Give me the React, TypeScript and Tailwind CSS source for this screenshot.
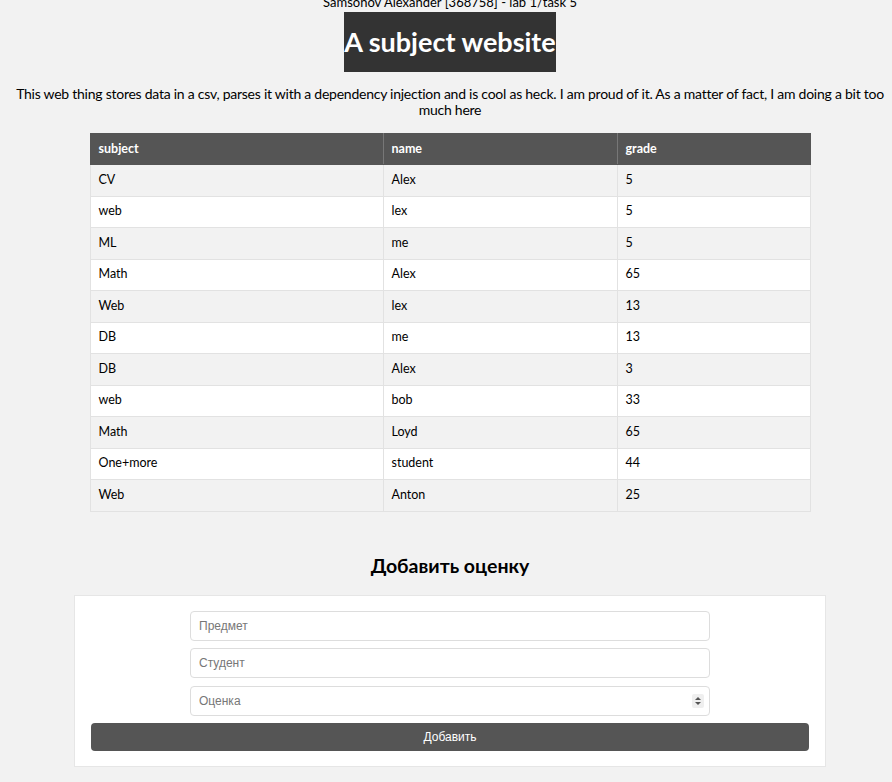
import React from "react";

const rows: [string, string, string][] = [
	["CV", "Alex", "5"],
	["web", "lex", "5"],
	["ML", "me", "5"],
	["Math", "Alex", "65"],
	["Web", "lex", "13"],
	["DB", "me", "13"],
	["DB", "Alex", "3"],
	["web", "bob", "33"],
	["Math", "Loyd", "65"],
	["One+more", "student", "44"],
	["Web", "Anton", "25"],
];

function Spinner() {
	return (
		<svg width="12" height="14" viewBox="0 0 12 14" className="absolute right-[6px] top-[8px]">
			<rect x="0" y="0" width="12" height="14" rx="2" fill="#efefef" />
			<path d="M3 6 L6 3 L9 6 Z" fill="#555" />
			<path d="M3 8 L6 11 L9 8 Z" fill="#555" />
		</svg>
	);
}

export default function App() {
	return (
		<div
			className="min-h-screen w-full bg-[#f2f2f2] pl-2 text-black"
			style={{ fontFamily: "Lato, 'Noto Sans', sans-serif" }}
		>
			<div className="flex flex-col items-center">
				<div className="-mt-[6px] text-[13px] leading-[16px]">
					Samsonov Alexander [368758] - lab 1/task 5
				</div>
				<h1 className="mt-[2px] h-[60px] bg-[#333333] text-[27px] font-bold leading-[60px] text-white">
					A subject website
				</h1>
				<p className="mt-[14px] whitespace-nowrap text-center text-[14px] leading-[15.5px] tracking-[-0.25px]">
					This web thing stores data in a csv, parses it with a dependency injection and is cool as heck. I am proud of it. As a matter of fact, I am doing a bit too
					<br />
					much here
				</p>

				<table className="mt-[16px] w-[720px] table-fixed border-collapse text-[12.5px]">
					<thead>
						<tr className="h-[31px] bg-[#555555] text-left text-white">
							<th className="w-[293px] border border-[#555555] border-r-[#777] px-2 font-bold">subject</th>
							<th className="w-[234px] border border-[#555555] border-r-[#777] px-2 font-bold">name</th>
							<th className="w-[193px] border border-[#555555] px-2 font-bold">grade</th>
						</tr>
					</thead>
					<tbody>
						{rows.map((r, i) => (
							<tr key={i} className={i % 2 === 0 ? "h-[31.5px] bg-[#f2f2f2]" : "h-[31.5px] bg-white"}>
								{r.map((c, j) => (
									<td key={j} className="border border-[#e2e2e2] px-2">
										{c}
									</td>
								))}
							</tr>
						))}
					</tbody>
				</table>

				<h2 className="mt-[41px] text-[19.5px] font-bold leading-[26px]">Добавить оценку</h2>

				<form
					className="mt-[16px] flex w-[752px] flex-col items-center gap-[7.5px] border border-[#e6e6e6] bg-white px-4 pb-[15px] pt-[15px]"
					style={{ fontFamily: "'Liberation Sans', Arial, sans-serif" }}
				>
					<input
						className="h-[30px] w-[520px] rounded-[4px] border border-[#dddddd] px-2 text-[12px] placeholder:text-[#777]"
						placeholder="Предмет"
					/>
					<input
						className="h-[30px] w-[520px] rounded-[4px] border border-[#dddddd] px-2 text-[12px] placeholder:text-[#777]"
						placeholder="Студент"
					/>
					<div className="relative w-[520px]">
						<input
							className="h-[30px] w-full rounded-[4px] border border-[#dddddd] px-2 text-[12px] placeholder:text-[#777]"
							placeholder="Оценка"
						/>
						<Spinner />
					</div>
					<button
						type="button"
						className="h-[28px] w-full rounded-[4px] bg-[#555555] text-[12px] text-white"
					>
						Добавить
					</button>
				</form>
			</div>
		</div>
	);
}
